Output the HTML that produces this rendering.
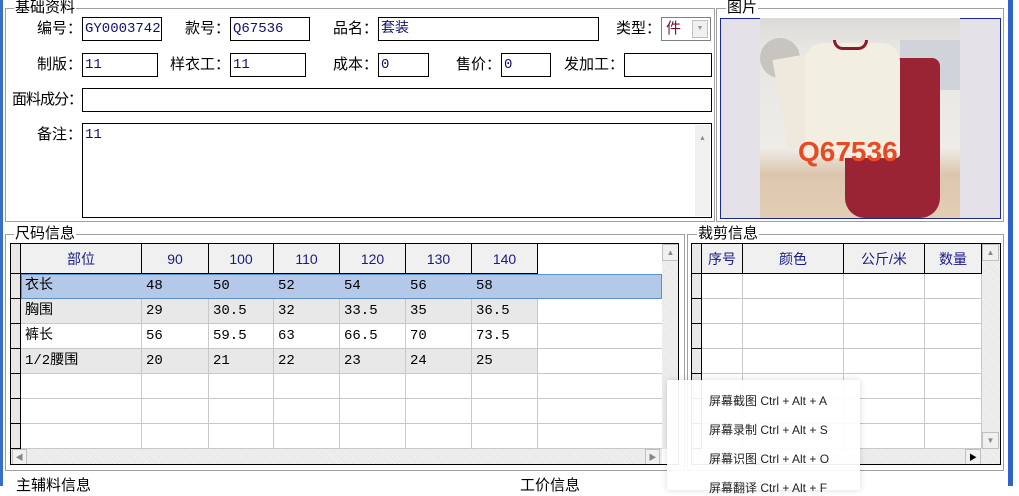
<!DOCTYPE html><html><head><meta charset="utf-8"><style>
*{box-sizing:border-box;margin:0;padding:0}
body{width:1019px;height:486px;overflow:hidden;background:#fff;position:relative;font-family:"Liberation Sans","Noto Sans CJK SC","WenQuanYi Zen Hei",sans-serif;font-size:14px;color:#000}
.a{position:absolute}
.fr{position:absolute;border:1px solid #a0a0a0;box-shadow:1px 1px 0 #fff inset}
.lg{position:absolute;background:#fff;padding:0 1px;font-size:15px;line-height:16px}
.lb{position:absolute;text-align:right;font-size:15px;line-height:18px;white-space:nowrap}
.in{position:absolute;border:1px solid #000;background:#fff;color:#101070;font-family:"Liberation Mono","Noto Sans CJK SC",monospace;font-size:14px;padding-left:2px;line-height:22px}
.c{position:absolute;border-right:1px solid #c8c8c8;border-bottom:1px solid #c8c8c8;font-family:"Liberation Mono","Noto Sans CJK SC",monospace;font-size:14px;line-height:24px;padding-left:4px}
.h{position:absolute;border-right:1px solid #000;border-bottom:1px solid #000;background:#f0f0f0;color:#1a1a8c;text-align:center;font-size:14px;line-height:30px}
.ind{position:absolute;background:#e8e8e8;border-right:1px solid #000;border-bottom:1px solid #000}
.sb{position:absolute;background:repeating-linear-gradient(45deg,#f4f4f4 0 1px,#e4e4e4 1px 2px)}
.bt{position:absolute;background:#f0f0f0;border:1px solid #c0c0c0;color:#888;font-size:8px;text-align:center;line-height:15px}
</style></head><body>
<div class="a" style="left:0;top:0;width:3px;height:486px;background:#3a6fc8"></div>
<div class="a" style="left:1008px;top:0;width:5px;height:486px;background:#2f63c8"></div>

<div class="fr" style="left:5px;top:8px;width:710px;height:214px"></div>
<div class="lg" style="left:14px;top:0px">基础资料</div>
<div class="fr" style="left:716px;top:8px;width:288px;height:214px"></div>
<div class="lg" style="left:726px;top:0px">图片</div>
<div class="a" style="left:720px;top:18px;width:281px;height:201px;background:#e4e2e8;border:1px solid #1a2a90"></div>
<div class="a" style="left:760px;top:18px;width:200px;height:200px;overflow:hidden;background:linear-gradient(180deg,#dcdad8 0,#e8e6e2 15%,#eeece8 65%,#dcc6ae 78%,#e2cdb5 100%)">
 <div class="a" style="left:0;top:20px;width:40px;height:40px;border-radius:50%;background:#c8c4c0"></div>
 <div class="a" style="left:140px;top:22px;width:60px;height:50px;background:#d0d4da"></div>
 <div class="a" style="left:85px;top:40px;width:95px;height:160px;background:#9a2433;border-radius:8px 8px 20px 20px"></div>
 <div class="a" style="left:20px;top:38px;width:40px;height:90px;background:#efe9dd;transform:rotate(-10deg)"></div>
 <div class="a" style="left:45px;top:25px;width:95px;height:115px;background:#f3eee2;border-radius:18px 18px 4px 4px"></div>
 <div class="a" style="left:73px;top:22px;width:35px;height:10px;border:3px solid #8a1a2a;border-top:none;border-radius:0 0 16px 16px"></div>
 <div class="a" style="left:38px;top:118px;font:bold 28px 'Liberation Sans',sans-serif;color:#e84a24">Q67536</div>
</div>

<div class="lb" style="left:0px;top:20px;width:82px">编号：</div>
<div class="in" style="left:82px;top:17px;width:80px;height:24px">GY0003742</div>
<div class="lb" style="left:150px;top:20px;width:80px">款号：</div>
<div class="in" style="left:230px;top:17px;width:80px;height:24px">Q67536</div>
<div class="lb" style="left:298px;top:20px;width:80px">品名：</div>
<div class="in" style="left:378px;top:17px;width:221px;height:24px">套装</div>
<div class="lb" style="left:581px;top:20px;width:80px">类型：</div>
<div class="a" style="left:661px;top:17px;width:50px;height:24px;border:1px solid #808080;background:#fff;color:#701030;padding-left:4px;line-height:22px;font-size:15px">件<div class="a" style="right:2px;top:2px;width:16px;height:18px;border:1px solid #c0c0c0;background:#f0f0f0;font-size:7px;color:#999;text-align:center;line-height:16px">▼</div></div>

<div class="lb" style="left:0px;top:56px;width:82px">制版：</div>
<div class="in" style="left:82px;top:53px;width:76px;height:24px">11</div>
<div class="lb" style="left:140px;top:56px;width:90px">样衣工：</div>
<div class="in" style="left:230px;top:53px;width:76px;height:24px">11</div>
<div class="lb" style="left:298px;top:56px;width:80px">成本：</div>
<div class="in" style="left:378px;top:53px;width:51px;height:24px">0</div>
<div class="lb" style="left:421px;top:56px;width:80px">售价：</div>
<div class="in" style="left:501px;top:53px;width:50px;height:24px">0</div>
<div class="lb" style="left:534px;top:56px;width:90px">发加工：</div>
<div class="in" style="left:624px;top:53px;width:88px;height:24px"></div>

<div class="lb" style="left:0px;top:91px;width:82px;letter-spacing:-1px">面料成分：</div>
<div class="in" style="left:82px;top:88px;width:630px;height:24px"></div>
<div class="lb" style="left:0px;top:126px;width:82px">备注：</div>
<div class="in" style="left:82px;top:123px;width:630px;height:95px">11<div class="a" style="right:1px;top:1px;width:15px;height:91px;background:#f0f0f0"><div style="font-size:7px;color:#888;text-align:center;margin-top:3px">▲</div><div style="font-size:7px;color:#888;text-align:center;margin-top:68px">▼</div></div></div>

<div class="fr" style="left:5px;top:234px;width:680px;height:237px"></div>
<div class="lg" style="left:14px;top:226px">尺码信息</div>
<div class="fr" style="left:687px;top:234px;width:317px;height:237px"></div>
<div class="lg" style="left:697px;top:226px">裁剪信息</div>

<div class="a" style="left:10px;top:243px;width:669px;height:222px;border:1px solid #000;background:#fff;overflow:hidden">
 <div class="ind" style="left:0;top:0;width:10px;height:30px"></div>
 <div class="h" style="left:10px;top:0;width:121px;height:30px">部位</div>
 <div class="h" style="left:131px;top:0;width:67px;height:30px">90</div>
 <div class="h" style="left:198px;top:0;width:65px;height:30px">100</div>
 <div class="h" style="left:263px;top:0;width:66px;height:30px">110</div>
 <div class="h" style="left:329px;top:0;width:66px;height:30px">120</div>
 <div class="h" style="left:395px;top:0;width:66px;height:30px">130</div>
 <div class="h" style="left:461px;top:0;width:66px;height:30px">140</div>
 <div class="ind" style="left:0;top:30px;width:10px;height:25px"></div>
 <div class="ind" style="left:0;top:55px;width:10px;height:25px"></div>
 <div class="ind" style="left:0;top:80px;width:10px;height:25px"></div>
 <div class="ind" style="left:0;top:105px;width:10px;height:25px"></div>
 <div class="ind" style="left:0;top:130px;width:10px;height:25px"></div>
 <div class="ind" style="left:0;top:155px;width:10px;height:25px"></div>
 <div class="ind" style="left:0;top:180px;width:10px;height:25px"></div>
 <div class="a" style="left:10px;top:30px;width:641px;height:25px;background:#b4c9ea;border:1px solid #5a8fd0"></div>
 <div id="lg"></div>
 <div class="sb" style="left:0;top:205px;width:651px;height:17px"></div>
 <div class="bt" style="left:1px;top:205px;width:15px;height:16px">◀</div>
 <div class="bt" style="left:634px;top:205px;width:15px;height:16px">▶</div>
 <div class="sb" style="left:651px;top:0;width:17px;height:205px"></div>
 <div class="bt" style="left:651px;top:0;width:17px;height:17px">▲</div>
</div>

<div class="a" style="left:691px;top:243px;width:310px;height:222px;border:1px solid #000;background:#fff;overflow:hidden">
 <div class="ind" style="left:0;top:0;width:10px;height:30px"></div>
 <div class="h" style="left:10px;top:0;width:41px;height:30px">序号</div>
 <div class="h" style="left:51px;top:0;width:101px;height:30px">颜色</div>
 <div class="h" style="left:152px;top:0;width:81px;height:30px">公斤/米</div>
 <div class="h" style="left:233px;top:0;width:57px;height:30px">数量</div>
 <div id="rg"></div>
 <div class="sb" style="left:290px;top:0;width:18px;height:205px"></div>
 <div class="bt" style="left:290px;top:0;width:17px;height:17px">▲</div>
 <div class="bt" style="left:290px;top:188px;width:17px;height:17px">▼</div>
 <div class="sb" style="left:0;top:205px;width:308px;height:17px"></div>
 <div class="bt" style="left:273px;top:205px;width:16px;height:16px;color:#000">▶</div>
</div>

<div class="a" style="left:16px;top:474px;font-size:15px">主辅料信息</div>
<div class="a" style="left:520px;top:474px;font-size:15px">工价信息</div>

<div class="a" style="left:667px;top:380px;width:193px;height:110px;background:rgba(255,255,255,0.93);box-shadow:0 0 6px rgba(0,0,0,0.15);font-size:12px;color:#222">
 <div class="a" style="left:42px;top:12px">屏幕截图 Ctrl + Alt + A</div>
 <div class="a" style="left:42px;top:41px">屏幕录制 Ctrl + Alt + S</div>
 <div class="a" style="left:42px;top:70px">屏幕识图 Ctrl + Alt + O</div>
 <div class="a" style="left:42px;top:99px">屏幕翻译 Ctrl + Alt + F</div>
</div>

<script>
var L=document.getElementById('lg'),xs=[10,131,198,263,329,395,461,527],d=[["衣长",48,50,52,54,56,58],["胸围",29,"30.5",32,"33.5",35,"36.5"],["裤长",56,"59.5",63,"66.5",70,"73.5"],["1/2腰围",20,21,22,23,24,25],[],[],[]],h='';
for(var r=0;r<7;r++){var t=30+r*25;for(var c=0;c<7;c++){var bg=r==0?'transparent':((r==1||r==3)?'#e8e8e8':'#fff');var bc=r==0?'border-color:transparent;':'';h+='<div class="c" style="'+bc+'left:'+xs[c]+'px;top:'+t+'px;width:'+(xs[c+1]-xs[c])+'px;height:25px;background:'+bg+'">'+(d[r][c]!==undefined?d[r][c]:'')+'</div>';}
if(r>0)h+='<div class="c" style="left:527px;top:'+t+'px;width:124px;height:25px;border-right:none"></div>';}
L.innerHTML=h;
var R=document.getElementById('rg'),rx=[10,51,152,233,290];h='';
for(r=0;r<7;r++){t=30+r*25;h+='<div class="ind" style="left:0;top:'+t+'px;width:10px;height:25px"></div>';for(c=0;c<4;c++)h+='<div class="c" style="left:'+rx[c]+'px;top:'+t+'px;width:'+(rx[c+1]-rx[c])+'px;height:25px"></div>';}
R.innerHTML=h;
</script>
</body></html>
